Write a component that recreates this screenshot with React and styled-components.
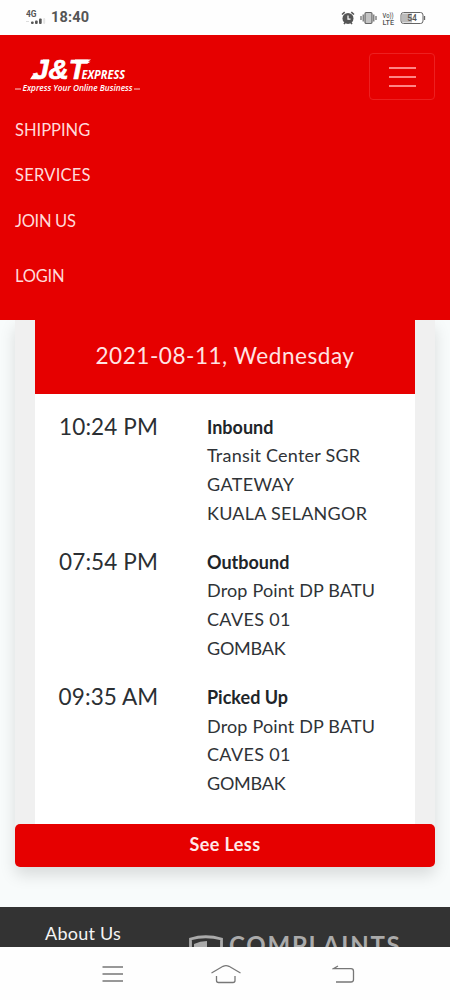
import React from 'react';
import styled, { createGlobalStyle } from 'styled-components';

const GlobalStyle = createGlobalStyle`
  * {
    box-sizing: border-box;
  }

  body {
    margin: 0;
    background: #fff;
    color: #212529;
    font-family: Lato, 'Noto Sans', sans-serif;
  }
`;

const menu = [
  { label: 'Shipping', spacing: 0 },
  { label: 'Services', spacing: 0.25 },
  { label: 'Join Us', spacing: -0.3 },
];

const events = [
  {
    time: '10:24 PM',
    status: 'Inbound',
    place: ['Transit Center SGR', 'GATEWAY', 'KUALA SELANGOR'],
    spacing: [0.22, 0.35, 0.25],
  },
  {
    time: '07:54 PM',
    status: 'Outbound',
    place: ['Drop Point DP BATU', 'CAVES 01', 'GOMBAK'],
    spacing: [0.16, 0.35, -0.25],
  },
  {
    time: '09:35 AM',
    status: 'Picked Up',
    place: ['Drop Point DP BATU', 'CAVES 01', 'GOMBAK'],
    spacing: [0.16, 0.35, -0.25],
  },
];

const SignalIcon = () => (
  <svg width="20" height="18" viewBox="0 0 20 18">
    <text x="0" y="8" fontFamily="Roboto" fontWeight="700" fontSize="8.500" fill="#555" textLength="10.500" lengthAdjust="spacingAndGlyphs">4G</text>
    <g fill="#555">
      <rect x="5" y="12.500" width="2.700" height="2.500" rx="1" />
      <rect x="9" y="11.500" width="2.700" height="3.500" rx="1" />
      <rect x="13" y="9.500" width="2.700" height="5.500" rx="1" />
      <rect x="17.200" y="9" width="2" height="6" rx="1" fill="#e4e4e4" />
      <rect x="0" y="12" width="3" height="1" fill="#ddd" />
    </g>
  </svg>
);

const AlarmIcon = () => (
  <svg width="14" height="14" viewBox="0 0 14 14">
    <circle cx="7" cy="7.400" r="5.500" fill="#555" />
    <path d="M1 3.500 3.700 1.200M13 3.500 10.300 1.200M3 13l1.200-1.500M11 13 9.800 11.500" stroke="#555" strokeWidth="1.600" />
    <path d="M7 4.500v3.600h2.500" fill="none" stroke="#fff" strokeWidth="1.200" />
  </svg>
);

const VibrateIcon = () => (
  <svg width="17" height="14" viewBox="0 0 17 14" fill="none" stroke="#666">
    <rect x="5" y="1.500" width="7" height="11" rx="1.200" fill="#c4c4c4" strokeWidth="1.200" />
    <path d="M3.200 3.500v7M13.800 3.500v7M1 5v4M16 5v4" strokeWidth="1.200" />
  </svg>
);

const VolteIcon = () => (
  <svg width="13" height="14" viewBox="0 0 13 14" fontFamily="Roboto" fontWeight="500" fill="#555">
    <text x="0.500" y="6.500" fontSize="7" textLength="11" lengthAdjust="spacingAndGlyphs">Vo))</text>
    <text x="0.500" y="13.500" fontSize="7.500" textLength="11.500" lengthAdjust="spacingAndGlyphs">LTE</text>
  </svg>
);

const BatteryIcon = () => (
  <svg width="26" height="14" viewBox="0 0 26 14">
    <rect x="1" y="1.500" width="22" height="11" rx="2.500" fill="#fff" stroke="#666" />
    <path d="M3 2.500h9v9H3a1 1 0 0 1-1-1v-7a1 1 0 0 1 1-1z" fill="#bbb" />
    <path d="M24.500 5v4" stroke="#666" strokeWidth="1.300" />
    <text x="12" y="10" textAnchor="middle" fontFamily="Roboto" fontSize="8.500" fontWeight="500" fill="#555">54</text>
  </svg>
);

const Logo = () => (
  <svg width="126" height="42" viewBox="0 0 126 42" fill="#fff" fontFamily="Open Sans" fontStyle="italic">
    <text x="18" y="26" fontFamily="Liberation Sans" fontWeight="700" fontSize="28" stroke="#fff" strokeWidth="0.700" textLength="53" lengthAdjust="spacingAndGlyphs">J&amp;T</text>
    <path d="M17.500 22.200h6v4h-8.500zM28 6.400h6v3.200h-7.500zM60 6.400h16l-3 2.400h2.500l-3 1.600H60z" />
    <text x="66.500" y="26" fontWeight="700" fontSize="11.500" textLength="43.500" lengthAdjust="spacingAndGlyphs">EXPRESS</text>
    <path d="M0 36h6M119 36h6" stroke="#fff" strokeWidth="0.800" />
    <text x="7.500" y="38.300" fontWeight="600" fontSize="8.500" textLength="110" lengthAdjust="spacingAndGlyphs">Express Your Online Business</text>
  </svg>
);

const Watermark = () => (
  <WatermarkSvg width="214" height="14" viewBox="0 0 214 14">
    <path d="M2.500 14V6Q17.500 1.500 33.500 6v8" fill="none" stroke="#aaa" strokeWidth="2.800" />
    <path d="M6 14v-3q6-3 13-3v6z" fill="#aaa" />
    <text x="41" y="21" fontFamily="Lato" fontWeight="700" fontSize="24" fill="#aaa" textLength="171">COMPLAINTS</text>
  </WatermarkSvg>
);

const App = () => (
  <Screen>
    <GlobalStyle />
    <StatusBar>
      <SignalIcon />
      <Clock>18:40</Clock>
      <StatusIcons>
        <AlarmIcon />
        <VibrateIcon />
        <VolteIcon />
        <BatteryIcon />
      </StatusIcons>
    </StatusBar>
    <Header>
      <Brand>
        <Logo />
        <Toggler>
          <TogglerBar />
          <TogglerBar />
          <TogglerBar />
        </Toggler>
      </Brand>
      <Menu>
        {menu.map(({ label, spacing }) => (
          <MenuItem key={label} $spacing={spacing}>{label}</MenuItem>
        ))}
        <MenuItem $separate $spacing={-0.2}>Login</MenuItem>
      </Menu>
    </Header>
    <Main>
      <Card>
        <Timeline>
          <DateHeading>2021-08-11, Wednesday</DateHeading>
          <Events>
            {events.map(({ time, status, place, spacing }) => (
              <Event key={time}>
                <Time>{time}</Time>
                <Details>
                  <Status>{status}</Status>
                  {place.map((line, i) => (
                    <Place key={line} $spacing={spacing[i]}>{line}</Place>
                  ))}
                </Details>
              </Event>
            ))}
          </Events>
        </Timeline>
        <Button>See Less</Button>
      </Card>
    </Main>
    <Footer>
      About Us
      <Watermark />
    </Footer>
    <SystemNav>
      <svg width="22" height="18" viewBox="0 0 22 18" stroke="#777" strokeWidth="1.300">
        <path d="M.5 2h20.500M.5 9h20.500M.5 16h20.500" />
      </svg>
      <HomeIcon width="30" height="20" viewBox="0 0 30 20" fill="none" stroke="#777" strokeWidth="1.300">
        <path d="M.5 9 12 2.300q3-1.500 6 0L29.500 9M5.500 12v4.500q0 2 2 2h14.500q2 0 2-2V12" />
      </HomeIcon>
      <svg width="23" height="20" viewBox="0 0 23 20" fill="none" stroke="#777" strokeWidth="1.300">
        <path d="M6 2 1.500 4.700H19q2.500 0 2.500 2.500v8.300q0 2.500-2.500 2.500H4" />
      </svg>
    </SystemNav>
  </Screen>
);

const Screen = styled.div`
  display: flex;
  flex-direction: column;
  width: 450px;
  height: 1000px;
  overflow: hidden;
`;

const StatusBar = styled.div`
  display: flex;
  align-items: center;
  height: 35px;
  padding: 0 24px 0 26px;
  background: #fefefe;
`;

const Clock = styled.span`
  margin-left: 5px;
  color: #555;
  font-family: Roboto, sans-serif;
  font-size: 14.5px;
  font-weight: 700;
  letter-spacing: 0.2px;
`;

const StatusIcons = styled.div`
  display: flex;
  align-items: center;
  gap: 5px;
  margin-left: auto;
`;

const Header = styled.header`
  position: relative;
  z-index: 1;
  height: 285px;
  padding: 18px 15px 0;
  background: #e60000;
`;

const Brand = styled.div`
  display: flex;
  justify-content: space-between;
  height: 54.5px;
`;

const Toggler = styled.div`
  display: flex;
  flex-direction: column;
  align-items: center;
  justify-content: center;
  gap: 7px;
  width: 66px;
  height: 47px;
  border: 1px solid #ed2020;
  border-radius: 4px;
`;

const TogglerBar = styled.span`
  width: 27px;
  height: 2px;
  background: #ff8585;
`;

const Menu = styled.nav`
  display: flex;
  flex-direction: column;
`;

const MenuItem = styled.a`
  margin-top: ${({ $separate }) => ($separate ? '10px' : 0)};
  padding: 10px 0;
  color: #ffdada;
  font-size: 16.5px;
  line-height: 25.6px;
  letter-spacing: ${({ $spacing }) => $spacing}px;
  text-transform: uppercase;
`;

const Main = styled.main`
  height: 587px;
  padding: 0 15px;
  background: #f8fbfb;
`;

const Card = styled.section`
  height: 547px;
  background: #f0f0f0;
  border-radius: 0 0 5px 5px;
  box-shadow: 0 8px 16px rgba(0, 0, 0, 0.13);
`;

const Timeline = styled.div`
  height: 504px;
  margin: 0 20px;
  background: #fff;
`;

const DateHeading = styled.h4`
  height: 73.5px;
  margin: 0;
  background: #e60000;
  color: #ffe3e3;
  font-size: 22.5px;
  font-weight: 400;
  line-height: 72px;
  letter-spacing: 0.55px;
  text-align: center;
`;

const Events = styled.div`
  display: flex;
  flex-direction: column;
  gap: 20px;
  padding-top: 19px;
`;

const Event = styled.div`
  display: flex;
`;

const Time = styled.div`
  width: 147px;
  margin-right: 25px;
  color: #2b2f33;
  font-size: 22.5px;
  line-height: 27px;
  letter-spacing: 0.1px;
  text-align: center;
`;

const Details = styled.div`
  line-height: 28.8px;
  white-space: nowrap;
`;

const Status = styled.div`
  font-size: 18px;
  font-weight: 700;
`;

const Place = styled.div`
  color: #2f3337;
  font-size: 18px;
  letter-spacing: ${({ $spacing }) => $spacing}px;
`;

const Button = styled.button`
  display: block;
  width: 100%;
  height: 43px;
  padding: 0 0 3px;
  border: 0;
  border-radius: 5px;
  background: #e60000;
  color: #ffe8e8;
  font-family: inherit;
  font-size: 18px;
  font-weight: 700;
  letter-spacing: 0.4px;
`;

const Footer = styled.footer`
  position: relative;
  height: 40px;
  padding-left: 45px;
  overflow: hidden;
  background: #333;
  color: #f4f4f4;
  font-size: 18px;
  line-height: 52px;
  letter-spacing: 0.25px;
`;

const WatermarkSvg = styled.svg`
  position: absolute;
  right: 48px;
  bottom: 0;
`;

const SystemNav = styled.div`
  display: flex;
  align-items: center;
  justify-content: space-between;
  height: 53px;
  padding: 0 95px 0 102px;
  background: #fefefe;
`;

const HomeIcon = styled.svg`
  margin-right: 5px;
`;

export default App;
